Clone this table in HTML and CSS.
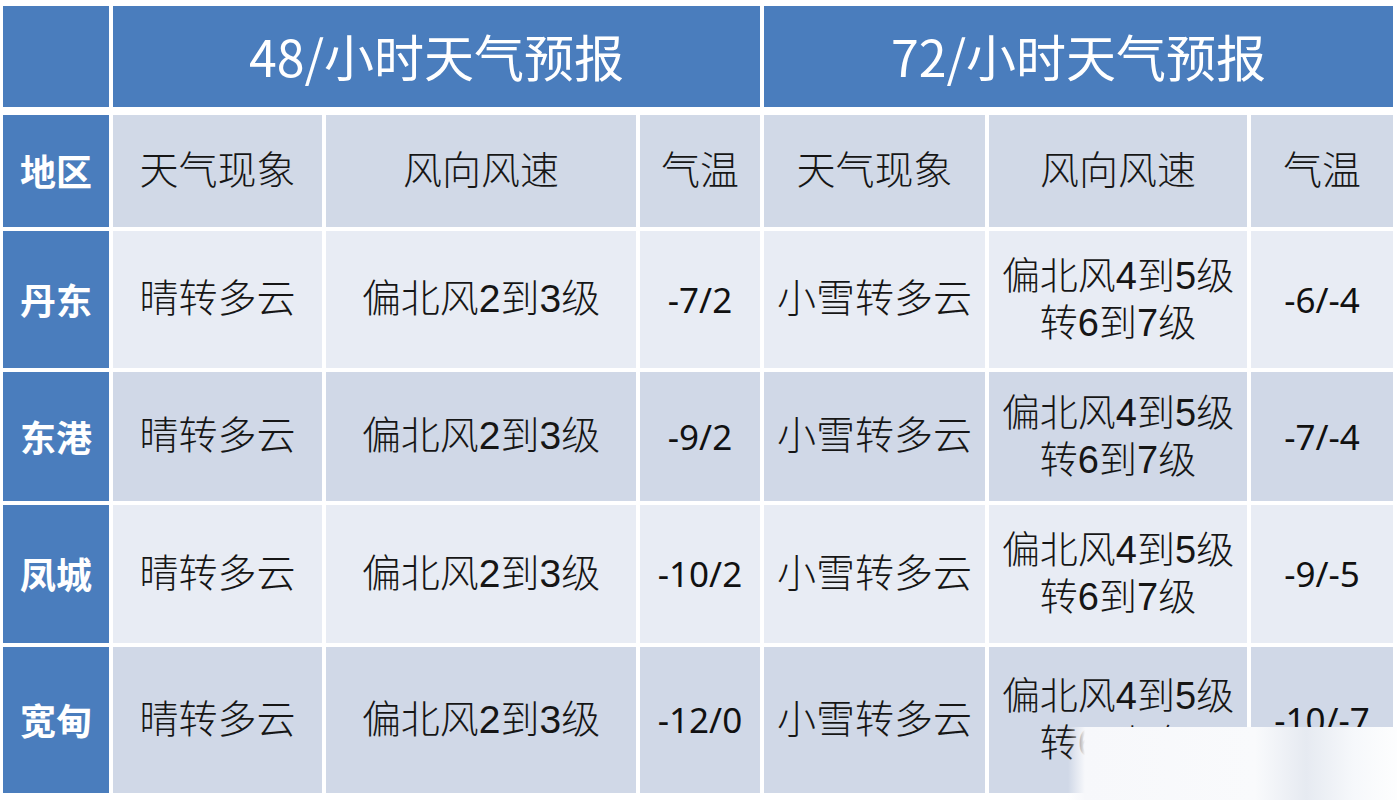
FILE: index.html
```html
<!DOCTYPE html>
<html lang="zh-CN">
<head>
<meta charset="utf-8">
<title>天气预报</title>
<link rel="stylesheet" href="styles.css">
</head>
<body>
<div class="page">
  <div class="table">
    <div class="cell blue h1"></div>
    <div class="cell blue h1 span3 title">48/小时天气预报</div>
    <div class="cell blue h1 span3 title">72/小时天气预报</div>

    <div class="cell blue region">地区</div>
    <div class="cell head">天气现象</div>
    <div class="cell head">风向风速</div>
    <div class="cell head">气温</div>
    <div class="cell head">天气现象</div>
    <div class="cell head">风向风速</div>
    <div class="cell head">气温</div>

    <div class="cell blue region">丹东</div>
    <div class="cell light">晴转多云</div>
    <div class="cell light">偏北风2到3级</div>
    <div class="cell light num">-7/2</div>
    <div class="cell light">小雪转多云</div>
    <div class="cell light two">偏北风4到5级<br>转6到7级</div>
    <div class="cell light num">-6/-4</div>

    <div class="cell blue region">东港</div>
    <div class="cell dark">晴转多云</div>
    <div class="cell dark">偏北风2到3级</div>
    <div class="cell dark num">-9/2</div>
    <div class="cell dark">小雪转多云</div>
    <div class="cell dark two">偏北风4到5级<br>转6到7级</div>
    <div class="cell dark num">-7/-4</div>

    <div class="cell blue region">凤城</div>
    <div class="cell light">晴转多云</div>
    <div class="cell light">偏北风2到3级</div>
    <div class="cell light num">-10/2</div>
    <div class="cell light">小雪转多云</div>
    <div class="cell light two">偏北风4到5级<br>转6到7级</div>
    <div class="cell light num">-9/-5</div>

    <div class="cell blue region">宽甸</div>
    <div class="cell dark">晴转多云</div>
    <div class="cell dark">偏北风2到3级</div>
    <div class="cell dark num">-12/0</div>
    <div class="cell dark">小雪转多云</div>
    <div class="cell dark two">偏北风4到5级<br>转6到7级</div>
    <div class="cell dark num">-10/-7</div>
  </div>
  <div class="watermark"></div>
</div>
</body>
</html>
```

FILE: styles.css
```css
html, body {
  margin: 0;
  padding: 0;
  background: #ffffff;
}

.page {
  position: relative;
  width: 1397px;
  height: 800px;
  overflow: hidden;
  padding: 6px 0 0 3px;
  box-sizing: border-box;
  font-family: "Noto Sans CJK SC", "Noto Sans", sans-serif;
}

.table {
  display: grid;
  grid-template-columns: 106px 209px 310px 120px 221px 258px 142px;
  grid-template-rows: 105px 112px 137px 129px 138px 146px;
  column-gap: 4px;
  row-gap: 4px;
  width: 1390px;
}

.cell {
  display: flex;
  align-items: center;
  justify-content: center;
  text-align: center;
  font-family: "Liberation Sans", "Noto Sans CJK SC", sans-serif;
  font-size: 39px;
  font-weight: 300;
  color: #161616;
  line-height: 1.2;
}

.h1 {
  margin-bottom: 4px;
}

.span3 {
  grid-column: span 3;
}

.blue {
  background: #4a7dbd;
  color: #ffffff;
}

.title {
  font-family: "Noto Sans CJK SC", "Noto Sans", sans-serif;
  font-size: 50px;
  font-weight: 400;
  padding-bottom: 4px;
}

.region {
  font-family: "Noto Sans CJK SC", sans-serif;
  font-size: 36px;
  font-weight: 700;
}

.head {
  background: #d1d9e7;
}

.light {
  background: #e8ecf4;
}

.dark {
  background: #d0d8e7;
}

.num {
  font-family: "Noto Sans", sans-serif;
  font-size: 35px;
  font-weight: 400;
  color: #111111;
}

.two {
  font-size: 38px;
  line-height: 47px;
}

.watermark {
  position: absolute;
  left: 1068px;
  top: 727px;
  width: 340px;
  height: 80px;
  background: linear-gradient(90deg, rgba(248,249,252,0) 0%, rgba(247,248,251,1) 5%, rgba(249,250,252,1) 55%, rgba(230,234,241,1) 70%, rgba(246,248,251,1) 84%, rgba(255,255,255,1) 100%);
}
```
